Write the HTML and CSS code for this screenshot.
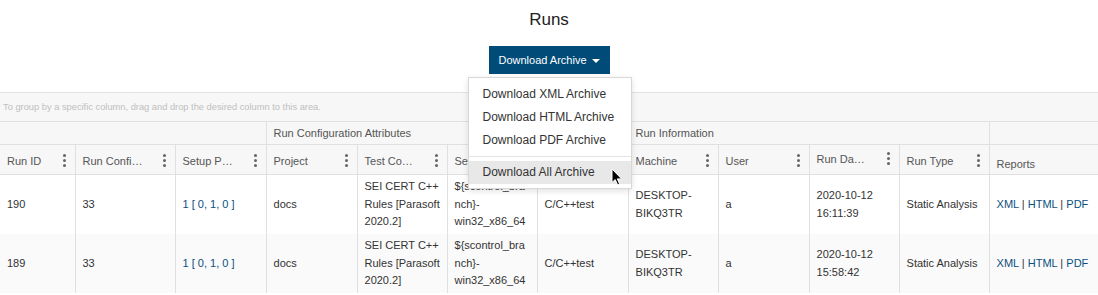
FILE: index.html
```html
<!DOCTYPE html>
<html lang="en">
<head>
    <meta charset="UTF-8">
    <meta name="viewport" content="width=device-width, initial-scale=1.0">
    <title>Runs</title>
    <link rel="stylesheet" href="styles.css">
</head>
<body>
    <h1 class="title">Runs</h1>

    <div class="toolbar">
        <div class="dropdown">
            <button class="dl-btn">Download Archive <span class="caret"></span></button>
            <ul class="dl-menu">
                <li>Download XML Archive</li>
                <li>Download HTML Archive</li>
                <li>Download PDF Archive</li>
                <li class="divider"></li>
                <li class="active">Download All Archive</li>
            </ul>
        </div>
    </div>

    <div class="grid">
        <div class="group-panel">To group by a specific column, drag and drop the desired column to this area.</div>
        <table class="runs">
            <colgroup>
                <col style="width:75px"><col style="width:100px"><col style="width:91px">
                <col style="width:91px"><col style="width:90px"><col style="width:90px">
                <col style="width:91px"><col style="width:90px"><col style="width:91px">
                <col style="width:90px"><col style="width:90px"><col style="width:110px">
            </colgroup>
            <thead>
                <tr class="band">
                    <th colspan="3"></th>
                    <th colspan="4">Run Configuration Attributes</th>
                    <th colspan="4">Run Information</th>
                    <th></th>
                </tr>
                <tr class="heads">
                    <th><div class="th-in"><span>Run ID</span><i class="kebab"></i></div></th>
                    <th><div class="th-in"><span>Run Confi…</span><i class="kebab"></i></div></th>
                    <th><div class="th-in"><span>Setup P…</span><i class="kebab"></i></div></th>
                    <th><div class="th-in"><span>Project</span><i class="kebab"></i></div></th>
                    <th><div class="th-in"><span>Test Co…</span><i class="kebab"></i></div></th>
                    <th><div class="th-in"><span>Session…</span><i class="kebab"></i></div></th>
                    <th><div class="th-in"><span>Tool</span><i class="kebab"></i></div></th>
                    <th><div class="th-in"><span>Machine</span><i class="kebab"></i></div></th>
                    <th><div class="th-in"><span>User</span><i class="kebab"></i></div></th>
                    <th><div class="th-in sorted"><span>Run Da…</span><i class="kebab"></i></div></th>
                    <th><div class="th-in"><span>Run Type</span><i class="kebab"></i></div></th>
                    <th class="plain">Reports</th>
                </tr>
            </thead>
            <tbody>
                <tr>
                    <td>190</td>
                    <td>33</td>
                    <td><a class="link" href="#">1 [ 0, 1, 0 ]</a></td>
                    <td>docs</td>
                    <td>SEI CERT C++ Rules [Parasoft 2020.2]</td>
                    <td class="wrap">${scontrol_branch}-win32_x86_64</td>
                    <td>C/C++test</td>
                    <td>DESKTOP-BIKQ3TR</td>
                    <td>a</td>
                    <td>2020-10-12 16:11:39</td>
                    <td>Static Analysis</td>
                    <td><a class="link" href="#">XML</a> | <a class="link" href="#">HTML</a> | <a class="link" href="#">PDF</a></td>
                </tr>
                <tr class="alt">
                    <td>189</td>
                    <td>33</td>
                    <td><a class="link" href="#">1 [ 0, 1, 0 ]</a></td>
                    <td>docs</td>
                    <td>SEI CERT C++ Rules [Parasoft 2020.2]</td>
                    <td class="wrap">${scontrol_branch}-win32_x86_64</td>
                    <td>C/C++test</td>
                    <td>DESKTOP-BIKQ3TR</td>
                    <td>a</td>
                    <td>2020-10-12 15:58:42</td>
                    <td>Static Analysis</td>
                    <td><a class="link" href="#">XML</a> | <a class="link" href="#">HTML</a> | <a class="link" href="#">PDF</a></td>
                </tr>
            </tbody>
        </table>
    </div>

    <!-- mouse pointer over the menu -->
    <svg class="pointer" width="12" height="18" viewBox="0 0 12 18">
        <path d="M1 1 L1 14.5 L4.2 11.6 L6.6 16.8 L8.6 15.9 L6.3 10.9 L10.6 10.9 Z" fill="#000" stroke="#fff" stroke-width="1"/>
    </svg>
</body>
</html>
```

FILE: styles.css
```css
body {
    margin: 0;
    font-family: "Liberation Sans", Arial, sans-serif;
    color: #333;
    background: #fff;
}
.title {
    margin: 0;
    padding-top: 10px;
    height: 20px;
    line-height: 20px;
    font-size: 17px;
    font-weight: normal;
    text-align: center;
    color: #222;
}
.toolbar {
    display: flex;
    justify-content: center;
    margin-top: 16px;
}
.dropdown {
    position: relative;
}
.dl-btn {
    display: flex;
    align-items: center;
    justify-content: center;
    gap: 5px;
    width: 121px;
    height: 28px;
    padding: 0;
    border: none;
    background: #004b78;
    color: #fff;
    font-family: "Liberation Sans", Arial, sans-serif;
    font-size: 11px;
}
.caret {
    width: 0;
    height: 0;
    border-left: 4px solid transparent;
    border-right: 4px solid transparent;
    border-top: 4px solid #fff;
    margin-top: 1px;
}
.dl-menu {
    position: absolute;
    left: -21px;
    top: 31px;
    width: 162px;
    margin: 0;
    padding: 5px 0 4px;
    list-style: none;
    background: #fff;
    border: 1px solid #d8d8d8;
    box-shadow: 0 2px 6px rgba(0, 0, 0, 0.12);
    z-index: 2;
}
.dl-menu li {
    height: 23px;
    line-height: 23px;
    padding-left: 14px;
    font-size: 12px;
    color: #333;
}
.dl-menu .divider {
    height: 1px;
    margin: 4px 0;
    padding: 0;
    background: #e3e3e3;
}
.dl-menu .active {
    background: #e8e8e8;
}
.grid {
    margin-top: 18px;
}
.group-panel {
    height: 28px;
    line-height: 28px;
    padding-left: 3px;
    border-top: 1px solid #e2e2e2;
    background: #f7f7f7;
    color: #c0c0c0;
    font-size: 9.3px;
}
.runs {
    width: 1098px;
    border-collapse: collapse;
    table-layout: fixed;
    font-size: 11px;
}
.runs th {
    padding: 0 7px;
    background: #f7f7f7;
    border-top: 1px solid #e0e0e0;
    border-bottom: 1px solid #e0e0e0;
    font-weight: normal;
    text-align: left;
    color: #555;
    white-space: nowrap;
}
.band th {
    height: 22px;
}
.band th + th {
    border-left: 1px solid #e0e0e0;
}
.heads th {
    height: 27px;
    padding: 2px 9px 0 7px;
}
.heads th + th {
    border-left: 1px solid #e0e0e0;
}
.heads th.plain {
    height: 21px;
    padding-top: 8px;
}
.th-in {
    display: flex;
    align-items: center;
    justify-content: space-between;
}
.kebab {
    width: 3px;
    height: 3px;
    border-radius: 50%;
    background: #666;
    box-shadow: 0 -5px 0 #666, 0 5px 0 #666;
    margin-top: -1px;
}
.sorted {
    margin-top: -3px;
}
.runs td {
    height: 59px;
    padding: 0 6px 0 7px;
    border-left: 1px solid #e0e0e0;
    vertical-align: middle;
    line-height: 17.5px;
    color: #333;
}
.runs td:first-child {
    border-left: none;
}
.runs td.wrap {
    overflow-wrap: anywhere;
}
.runs tr.alt td {
    background: #fafafa;
}
.link {
    color: #0b4f80;
    text-decoration: none;
}
.pointer {
    position: absolute;
    left: 611px;
    top: 168px;
    z-index: 3;
}
```
